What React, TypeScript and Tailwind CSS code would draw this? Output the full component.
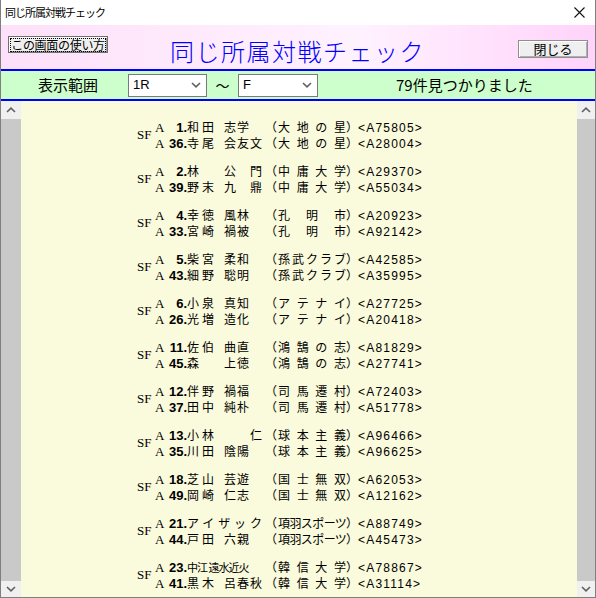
import React from 'react';

type Line = {
    no: number;
    name: string;
    mode?: 'slots' | 'justify' | 'tight';
    school: string;
    code: string;
};

// five name slots: family name (2), given name (3)
const SLOT_W = ['w-[15px]', 'w-[22px]', 'w-[13px]', 'w-[13px]', 'w-[15px]'];

const GROUPS: [Line, Line][] = [
    [
        { no: 1, name: '和田志学　', school: '大地の星', code: 'A75805' },
        { no: 36, name: '寺尾会友文', school: '大地の星', code: 'A28004' },
    ],
    [
        { no: 2, name: '林　公　門', school: '中庸大学', code: 'A29370' },
        { no: 39, name: '野末九　鼎', school: '中庸大学', code: 'A55034' },
    ],
    [
        { no: 4, name: '幸徳風林　', school: '孔明市', code: 'A20923' },
        { no: 33, name: '宮崎禍被　', school: '孔明市', code: 'A92142' },
    ],
    [
        { no: 5, name: '柴宮柔和　', school: '孫武クラブ', code: 'A42585' },
        { no: 43, name: '細野聡明　', school: '孫武クラブ', code: 'A35995' },
    ],
    [
        { no: 6, name: '小泉真知　', school: 'アテナイ', code: 'A27725' },
        { no: 26, name: '光増造化　', school: 'アテナイ', code: 'A20418' },
    ],
    [
        { no: 11, name: '佐伯曲直　', school: '鴻鵠の志', code: 'A81829' },
        { no: 45, name: '森　上徳　', school: '鴻鵠の志', code: 'A27741' },
    ],
    [
        { no: 12, name: '伴野禍福　', school: '司馬遷村', code: 'A72403' },
        { no: 37, name: '田中純朴　', school: '司馬遷村', code: 'A51778' },
    ],
    [
        { no: 13, name: '小林　　仁', school: '球本主義', code: 'A96466' },
        { no: 35, name: '川田陰陽　', school: '球本主義', code: 'A96625' },
    ],
    [
        { no: 18, name: '芝山芸遊　', school: '国士無双', code: 'A62053' },
        { no: 49, name: '岡崎仁志　', school: '国士無双', code: 'A12162' },
    ],
    [
        { no: 21, name: 'アイザック', mode: 'justify', school: '項羽スポーツ', code: 'A88749' },
        { no: 44, name: '戸田六親　', school: '項羽スポーツ', code: 'A45473' },
    ],
    [
        { no: 23, name: '中江 遠水近火', mode: 'tight', school: '韓信大学', code: 'A78867' },
        { no: 41, name: '黒木呂春秋', school: '韓信大学', code: 'A31114' },
    ],
];

const CJK = "font-['Noto_Sans_CJK_JP',sans-serif]";

function Chevron({ up }: { up?: boolean }) {
    return (
        <svg width="10" height="6" viewBox="0 0 10 6" fill="none">
            <path
                d={up ? 'M1 5L5 1.2L9 5' : 'M1 1L5 4.8L9 1'}
                stroke="#606060"
                strokeWidth={1.6}
            />
        </svg>
    );
}

function ScrollBar() {
    return (
        <div className="flex flex-col h-full bg-[#c9c9c9]">
            <div className="h-[18px] bg-[#f0f0f0] flex items-center justify-center shrink-0">
                <Chevron up />
            </div>
            <div className="flex-1" />
            <div className="h-[16px] bg-[#f0f0f0] flex items-center justify-center shrink-0">
                <Chevron />
            </div>
        </div>
    );
}

function Name({ line }: { line: Line }) {
    if (line.mode === 'justify') {
        return (
            <span className={`w-[78px] pr-[3px] text-[12px] [text-align-last:justify] ${CJK}`}>{line.name}</span>
        );
    }
    if (line.mode === 'tight') {
        return (
            <span className={`w-[78px] text-[11px] tracking-[-1px] whitespace-pre ${CJK}`}>{line.name}</span>
        );
    }
    return (
        <span className={`w-[78px] flex text-[12px] ${CJK}`}>
            {Array.from(line.name).map((ch, i) => (
                <span key={i} className={`${SLOT_W[i]} shrink-0`}>{ch}</span>
            ))}
        </span>
    );
}

function Row({ line }: { line: Line }) {
    const long = line.school.length > 5;
    return (
        <div className="flex items-baseline h-[16px] leading-[16px] whitespace-nowrap text-black">
            <span className="w-[9px] text-[13px] font-['Liberation_Serif',serif]">A</span>
            <span className="w-[23px] text-right text-[13px] font-bold font-['Liberation_Sans',sans-serif]">{line.no}.</span>
            <Name line={line} />
            <span className={`w-[13px] text-[12px] ${CJK}`}>（</span>
            <span className={`w-[68px] text-[12px] [text-align-last:justify] ${long ? 'tracking-[-0.8px]' : ''} ${CJK}`}>{line.school}</span>
            <span className={`w-[12px] text-[12px] ${CJK}`}>）</span>
            <span className="text-[12px] tracking-[1.2px] font-['Liberation_Sans',sans-serif]">&lt;{line.code}&gt;</span>
        </div>
    );
}

function Select({ value, className }: { value: string; className: string }) {
    return (
        <div className={`h-[23px] bg-white border border-[#7a7a7a] flex items-center justify-between pl-[4px] pr-[5px] ${className}`}>
            <span className="text-[13px] font-['Liberation_Sans',sans-serif]">{value}</span>
            <Chevron />
        </div>
    );
}

export default function App() {
    return (
        <div className="w-[596px] h-[598px] flex flex-col bg-white border-x border-b border-[#7f7f7f] overflow-hidden">
            {/* title bar */}
            <div className="h-[25px] flex items-center justify-between pl-[4px] pr-[10px] shrink-0">
                <span className={`text-[11px] tracking-[-1px] text-black ${CJK}`}>同じ所属対戦チェック</span>
                <svg width="11" height="11" viewBox="0 0 11 11" stroke="#111" strokeWidth={1.1}>
                    <path d="M0.5 0.5L10.5 10.5M10.5 0.5L0.5 10.5" />
                </svg>
            </div>

            {/* header */}
            <div className="h-[44px] flex items-start shrink-0 bg-gradient-to-r from-[#fde0f9] via-[#fff2ff] via-60% to-[#ffd3fa]">
                <button className="ml-[7px] mt-[11px] w-[100px] h-[17px] bg-[#efefef] border border-[#6f6f6f] shadow-[inset_1px_1px_0_#ffffff,inset_-1px_-1px_0_#a0a0a0] flex items-center justify-center p-0 whitespace-nowrap">
                    <span className={`text-[12px] leading-[12px] tracking-[-0.3px] border border-dotted border-black ${CJK}`}>この画面の使い方</span>
                </button>
                <span className={`ml-[62px] mt-[13px] text-[24px] leading-[26px] tracking-[1.5px] text-[#0000ff] font-light ${CJK}`}>同じ所属対戦チェック</span>
                <div className="flex-1" />
                <button className={`mr-[7px] mt-[15px] w-[70px] h-[18px] bg-[#efefef] border border-[#8f8f8f] shadow-[inset_1px_1px_0_#ffffff,inset_-1px_-1px_0_#b0b0b0] flex items-center justify-center text-[13px] ${CJK}`}>
                    閉じる
                </button>
            </div>
            <div className="h-[2px] bg-[#0000ff] shrink-0" />

            {/* filter bar */}
            <div className="h-[28px] bg-[#ccffcc] flex items-center pl-[37px] shrink-0">
                <span className={`w-[90px] text-[15px] text-black ${CJK}`}>表示範囲</span>
                <Select value="1R" className="w-[79px]" />
                <span className={`w-[31px] text-center text-[14px] ${CJK}`}>～</span>
                <Select value="F" className="w-[80px]" />
                <span className={`ml-[78px] text-[15px] text-black ${CJK}`}>79件見つかりました</span>
            </div>
            <div className="h-[2px] bg-[#0000ff] shrink-0" />

            {/* list */}
            <div className="flex-1 flex min-h-0">
                <div className="w-[20px] shrink-0">
                    <ScrollBar />
                </div>
                <div className="flex-1 bg-[#fafadc] overflow-hidden pl-[116px] pt-[18px]">
                    <div className="flex flex-col gap-[12px]">
                        {GROUPS.map((g, i) => (
                            <div key={i} className="flex items-center">
                                <span className="w-[18px] text-[13px] leading-[16px] font-['Liberation_Serif',serif]">SF</span>
                                <div className="flex flex-col">
                                    <Row line={g[0]} />
                                    <Row line={g[1]} />
                                </div>
                            </div>
                        ))}
                    </div>
                </div>
                <div className="w-[18px] shrink-0">
                    <ScrollBar />
                </div>
            </div>
        </div>
    );
}
